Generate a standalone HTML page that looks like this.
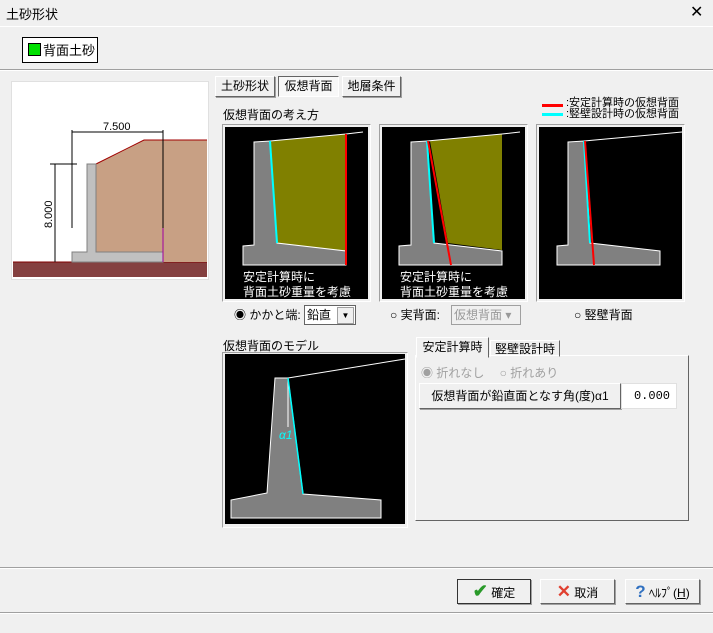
<!DOCTYPE html>
<html><head><meta charset="utf-8"><style>
body{margin:0;width:713px;height:633px;background:#f0f0f0;position:relative;overflow:hidden;font-family:"Liberation Sans","Noto Sans CJK JP",sans-serif;font-size:12px;color:#000}
.a{position:absolute}
.btn{position:absolute;background:#f0f0f0;border:1px solid;border-color:#fff #646464 #646464 #fff;box-shadow:1px 1px 0 #a0a0a0;text-align:center;line-height:18px;font-size:12px}
.sunk{position:absolute;border:1px solid;border-color:#a0a0a0 #fff #fff #a0a0a0}
</style></head><body>
<div class="a" style="left:6px;top:4px;font-size:13px">土砂形状</div>
<div class="a" style="left:690px;top:2px;font-size:16px">✕</div>
<div class="a" style="left:0;top:26px;width:713px;height:1px;background:#fff"></div>
<div class="a" style="left:22px;top:37px;width:74px;height:24px;border:1px solid #000;background:#fff"></div>
<div class="a" style="left:28px;top:43px;width:11px;height:11px;background:#00e000;border:1px solid #000"></div>
<div class="a" style="left:43px;top:40px;font-size:13px">背面土砂</div>
<div class="a" style="left:0;top:69px;width:713px;height:1px;background:#a0a0a0"></div>
<div class="a" style="left:0;top:70px;width:713px;height:1px;background:#fff"></div>
<div class="a" style="left:11px;top:81px;width:196px;height:197px;background:#fff;border:1px solid #e0e0e0"></div>

<div class="btn" style="left:215px;top:76px;width:58px;height:19px">土砂形状</div>
<div class="btn" style="left:278px;top:76px;width:59px;height:19px;border-color:#646464 #fff #fff #646464;box-shadow:none;background:#f8f8f8">仮想背面</div>
<div class="btn" style="left:342px;top:76px;width:57px;height:19px">地層条件</div>
<div class="a" style="left:223px;top:106px">仮想背面の考え方</div>
<div class="a" style="left:566px;top:98px;font-size:11px;line-height:11px">:安定計算時の仮想背面<br>:竪壁設計時の仮想背面</div>

<div class="sunk" style="left:222px;top:124px;width:147px;height:176px"></div>
<div class="sunk" style="left:379px;top:124px;width:147px;height:176px"></div>
<div class="sunk" style="left:536px;top:124px;width:147px;height:176px"></div>
<div class="sunk" style="left:222px;top:352px;width:184px;height:174px"></div>

<div class="a" style="left:234px;top:306px;font-size:12px">◉ かかと端:</div>
<div class="a" style="left:304px;top:305px;width:50px;height:18px;background:#fff;border:1px solid #646464"></div>
<div class="a" style="left:307px;top:306px">鉛直</div>
<div class="a" style="left:337px;top:307px;width:15px;height:15px;background:#f0f0f0;border:1px solid #a0a0a0;text-align:center;font-size:8px;line-height:15px">▼</div>
<div class="a" style="left:390px;top:306px">○ 実背面:</div>
<div class="a" style="left:451px;top:305px;width:68px;height:18px;background:#f0f0f0;border:1px solid #a0a0a0;color:#999"></div>
<div class="a" style="left:454px;top:306px;color:#999">仮想背面 ▾</div>
<div class="a" style="left:574px;top:306px">○ 竪壁背面</div>

<div class="a" style="left:223px;top:337px">仮想背面のモデル</div>
<div class="a" style="left:415px;top:355px;width:272px;height:164px;border:1px solid;border-color:#fff #646464 #646464 #fff"></div>
<div class="a" style="left:416px;top:337px;width:71px;height:19px;background:#f0f0f0;border:1px solid;border-color:#fff #646464 transparent #fff;text-align:center;line-height:18px">安定計算時</div>
<div class="a" style="left:490px;top:340px;width:68px;height:15px;border:1px solid;border-color:#fff #646464 transparent #fff;text-align:center;line-height:16px">竪壁設計時</div>
<div class="a" style="left:421px;top:364px;color:#a0a0a0">◉ 折れなし　 ○ 折れあり</div>
<div class="btn" style="left:419px;top:383px;width:200px;height:24px;line-height:24px">仮想背面が鉛直面となす角(度)α1</div>
<div class="a" style="left:621px;top:383px;width:54px;height:24px;background:#fff;border:1px solid #e0e0e0;text-align:right;line-height:24px;font-family:'Liberation Mono',monospace"><span style="padding-right:6px">0.000</span></div>

<div class="a" style="left:0;top:567px;width:713px;height:1px;background:#a0a0a0"></div>
<div class="a" style="left:0;top:568px;width:713px;height:1px;background:#fff"></div>
<div class="btn" style="left:457px;top:579px;width:72px;height:23px;border:1px solid #333;line-height:23px"><span style="color:#2a9a2a;font-size:18px;font-weight:bold">✔</span> 確定</div>
<div class="btn" style="left:540px;top:579px;width:73px;height:23px;line-height:23px"><span style="color:#e04030;font-size:17px;font-weight:bold">✕</span> 取消</div>
<div class="btn" style="left:625px;top:579px;width:73px;height:23px;line-height:23px"><span style="color:#3070c0;font-size:17px;font-weight:bold">?</span> ﾍﾙﾌﾟ(<u>H</u>)</div>
<div class="a" style="left:0;top:612px;width:713px;height:1px;background:#a0a0a0"></div>
<div class="a" style="left:0;top:613px;width:713px;height:1px;background:#fff"></div>

<svg class="a" style="left:0;top:0" width="713" height="633">
<rect x="542" y="104" width="21" height="3" fill="#f00"/><rect x="542" y="113" width="21" height="3" fill="#0ff"/>
<rect x="13" y="262" width="194" height="15" fill="#844040"/>
<line x1="13" y1="262" x2="207" y2="262" stroke="#800000"/>
<polygon points="96,164 144,140 207,140 207,262 96,262" fill="#c8a084"/>
<polyline points="96,164 144,140 207,140" fill="none" stroke="#a00000"/>
<polygon points="87,164 96,164 96,252 163,252 163,262 72,262 72,252 87,252" fill="#c0c0c0" stroke="#808080"/>
<g stroke="#000" fill="none"><line x1="72" y1="132" x2="163" y2="132"/><line x1="72" y1="130" x2="72" y2="228"/><line x1="163" y1="130" x2="163" y2="228"/><line x1="55" y1="164" x2="55" y2="262"/><line x1="50" y1="164" x2="77" y2="164"/></g>
<line x1="163" y1="228" x2="163" y2="262" stroke="#a000a0"/>
<text x="103" y="130" font-size="11" font-family="Liberation Sans">7.500</text>
<text transform="translate(52,228) rotate(-90)" font-size="11" font-family="Liberation Sans">8.000</text>
<rect x="225" y="127" width="143" height="172" fill="#000"/>
<polygon points="270,141 346,134 346,251 277,243" fill="#808000"/>
<polygon points="254,142 270,141 277,243 346,251 346,265 243,265 243,246 254,245" fill="#808080" stroke="#fff"/>
<polyline points="270,141 346,134 363,132" fill="none" stroke="#fff"/>
<line x1="270" y1="141" x2="277" y2="243" stroke="#0ff" stroke-width="2"/>
<line x1="346" y1="134" x2="346" y2="265" stroke="#f00" stroke-width="2"/>
<text x="243" y="281" fill="#fff" font-size="12">安定計算時に</text><text x="243" y="296" fill="#fff" font-size="12">背面土砂重量を考慮</text>
<rect x="382" y="127" width="143" height="172" fill="#000"/>
<polygon points="430,141 502,134 502,250 448,243" fill="#808000"/>
<polygon points="411,142 427,141 434,243 502,251 502,265 399,265 399,246 411,245" fill="#808080" stroke="#fff"/>
<polyline points="427,141 502,134 520,132" fill="none" stroke="#fff"/>
<line x1="427" y1="141" x2="434" y2="243" stroke="#0ff" stroke-width="2"/>
<line x1="428" y1="141" x2="451" y2="265" stroke="#f00" stroke-width="2"/>
<text x="400" y="281" fill="#fff" font-size="12">安定計算時に</text><text x="400" y="296" fill="#fff" font-size="12">背面土砂重量を考慮</text>
<rect x="539" y="127" width="143" height="172" fill="#000"/>
<polygon points="568,142 584,141 590,243 660,251 660,265 557,265 557,246 568,245" fill="#808080" stroke="#fff"/>
<polyline points="584,141 682,132" fill="none" stroke="#fff"/>
<line x1="584" y1="141" x2="590" y2="243" stroke="#0ff" stroke-width="2"/>
<line x1="585" y1="141" x2="594" y2="265" stroke="#f00" stroke-width="2"/>
<rect x="225" y="354" width="180" height="170" fill="#000"/>
<polygon points="275,378 288,378 303,494 381,500 381,518 231,518 231,500 267,493" fill="#808080" stroke="#fff"/>
<polyline points="288,378 405,359" fill="none" stroke="#fff"/>
<line x1="288" y1="378" x2="288" y2="427" stroke="#fff"/>
<line x1="288" y1="378" x2="303" y2="494" stroke="#0ff" stroke-width="1.5"/>
<text x="279" y="439" fill="#0ff" font-size="12" font-style="italic">α1</text>
</svg>
</body></html>
